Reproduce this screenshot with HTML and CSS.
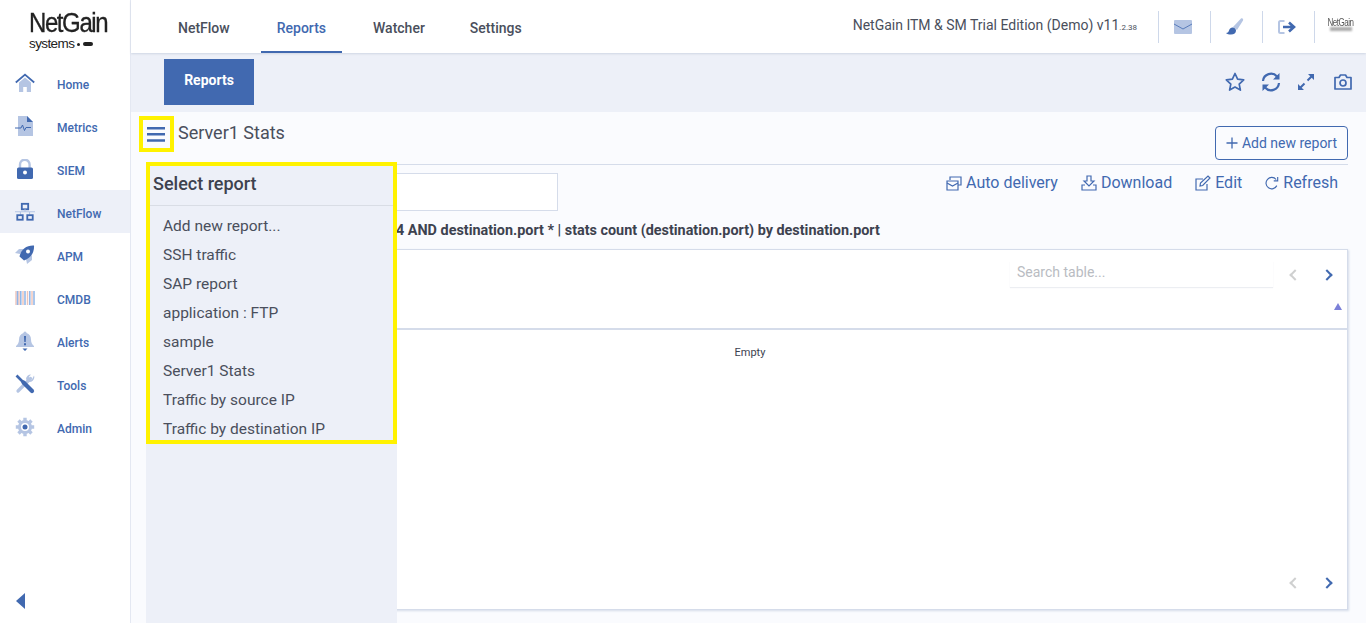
FILE: index.html
```html
<!DOCTYPE html>
<html lang="en">
<head>
    <meta charset="UTF-8">
    <title>NetGain - Reports</title>
    <link rel="stylesheet" href="styles.css">
</head>
<body>
<div class="app">
    <aside class="sidebar">
        <div class="logo">
            <div class="logo_name">NetGain</div>
            <div class="logo_sub">systems <span class="logo_dot"></span><span class="logo_key"></span></div>
        </div>
        <nav class="side_nav">
            <a class="side_item">
                <svg viewBox="0 0 20 20"><path d="M4 9.500 10 4.500l6 5V19h-4.200v-5H8.200v5H4z" fill="#b5c5e3"/><path d="M.8 9.500 10 1.600l9.200 7.900" fill="none" stroke="#4169b0" stroke-width="1.800"/></svg>
                <span>Home</span>
            </a>
            <a class="side_item">
                <svg viewBox="0 0 20 20"><path d="M3 0h9l6 6v14H3z" fill="#b5c5e3"/><path d="M12 0l6 6h-6z" fill="#4169b0"/><path d="M0 12h6l1.500-3 2 5.500 1.500-3h5" fill="none" stroke="#4169b0" stroke-width="1"/></svg>
                <span>Metrics</span>
            </a>
            <a class="side_item">
                <svg viewBox="0 0 20 20"><path d="M5 9V5.500a4.800 4.800 0 0 1 9.600 0V9" fill="none" stroke="#b5c5e3" stroke-width="2.400"/><rect x="2" y="8.500" width="16" height="11.500" rx="1.500" fill="#4169b0"/><circle cx="10" cy="13.500" r="2" fill="#fff"/></svg>
                <span>SIEM</span>
            </a>
            <a class="side_item active">
                <svg viewBox="0 0 22 20"><rect x="7.500" y="1" width="7" height="6" fill="none" stroke="#4169b0" stroke-width="2"/><path d="M11 7v3M0 9.800h22M6 10v3M16 10v3" stroke="#b5c5e3" stroke-width="1.200"/><rect x="2.500" y="13.500" width="6" height="5" fill="none" stroke="#4169b0" stroke-width="2"/><rect x="13.500" y="13.500" width="6" height="5" fill="none" stroke="#4169b0" stroke-width="2"/></svg>
                <span>NetFlow</span>
            </a>
            <a class="side_item">
                <svg viewBox="0 0 20 20"><path d="M5 9 0 8l4-4h5zM11 14l1 5 5-4v-5z" fill="#b5c5e3"/><path d="M4.500 11.500C6 4 12 0 19 .5c.5 7-3 12.500-10 15z" fill="#4169b0"/><circle cx="13" cy="6.500" r="2" fill="#fff"/></svg>
                <span>APM</span>
            </a>
            <a class="side_item">
                <svg viewBox="0 0 20 20"><path d="M1 3v14M4 3v14M8 3v14M12.500 3v14M17 3v14" stroke="#f0c4b8" stroke-width="1.400"/><path d="M2.500 3v14M5.800 3v14M10 3v14M14.800 3v14M19 3v14" stroke="#8fb5e8" stroke-width="1.500"/></svg>
                <span>CMDB</span>
            </a>
            <a class="side_item">
                <svg viewBox="0 0 20 20"><path d="M10 .5c1 0 1.500.8 1.500 1.500 3 1 4.500 3.500 4.500 6.500 0 3 1 5 3 6.500v1H1v-1c2-1.500 3-3.500 3-6.500S5.500 3 8.500 2c0-.7.500-1.500 1.500-1.500z" fill="#b5c5e3"/><path d="M9 5h2l-.3 6H9.300zM9 12.300h2v2H9zM7.500 17.500h5L10 20z" fill="#4169b0"/></svg>
                <span>Alerts</span>
            </a>
            <a class="side_item">
                <svg viewBox="0 0 20 20"><path d="M15.500 4.500 3 17" stroke="#b5c5e3" stroke-width="3.200" fill="none" stroke-linecap="round"/><path d="M19 1.500a4.800 4.800 0 0 1-6.500 6L11 5a4.800 4.800 0 0 1 5-4.500L13.800 3l1 2.200 2 .5z" fill="#b5c5e3"/><path d="M1.500 1.500 8 8" stroke="#4169b0" stroke-width="2.600" fill="none"/><path d="M8.500 8.500 17 17" stroke="#4169b0" stroke-width="4.200" fill="none" stroke-linecap="round"/></svg>
                <span>Tools</span>
            </a>
            <a class="side_item">
                <svg viewBox="0 0 20 20"><circle cx="10" cy="10" r="7" fill="#b5c5e3"/><path d="M10 .8v18.400M.8 10h18.400M3.500 3.500l13 13M16.500 3.500l-13 13" stroke="#b5c5e3" stroke-width="3.400"/><circle cx="10" cy="10" r="4" fill="#fff"/><circle cx="10" cy="10" r="2.500" fill="#4169b0"/></svg>
                <span>Admin</span>
            </a>
        </nav>
        <div class="collapse_arrow"></div>
    </aside>

    <div class="main">
        <header class="topbar">
            <ul class="top_tabs">
                <li>NetFlow</li>
                <li class="active">Reports</li>
                <li>Watcher</li>
                <li>Settings</li>
            </ul>
            <div class="edition">NetGain ITM &amp; SM Trial Edition (Demo) v11<small>.2.38</small></div>
            <div class="top_icon">
                <svg viewBox="0 0 18 14" width="18" height="14"><rect width="18" height="14" rx="1" fill="#b5c5e3"/><path d="M0 4l9 5 9-5" fill="none" stroke="#4169b0" stroke-width=".8"/></svg>
            </div>
            <div class="top_icon">
                <svg viewBox="0 0 18 18" width="18" height="18"><path d="M7 9 15 .5c1-.8 2.800.5 2 2L11 12z" fill="#b5c5e3"/><path d="M6 9.500c2-.5 4 1 4 3 0 2.500-2 4-5 4-2 0-4-.5-5-1.500 2 0 2.500-1 3-2.500.4-1.500 1.500-2.700 3-3z" fill="#4169b0"/></svg>
            </div>
            <div class="top_icon">
                <svg viewBox="0 0 18 14" width="18" height="14"><path d="M6.500 1H2.500a1.500 1.500 0 0 0-1.500 1.500v9A1.500 1.500 0 0 0 2.500 13h4" fill="none" stroke="#b5c5e3" stroke-width="2"/><path d="M5 7h10M11 2.500 16 7l-5 4.500" fill="none" stroke="#4169b0" stroke-width="2.600"/></svg>
            </div>
            <div class="top_icon user_logo"><span>NetGain</span><i></i></div>
        </header>

        <div class="tab_strip">
            <div class="strip_tab">Reports</div>
            <div class="strip_icons">
                <svg viewBox="0 0 20 20" width="20" height="20"><path d="M10 1.500l2.600 5.600 6.100.8-4.500 4.200 1.200 6L10 15.100l-5.400 3 1.200-6L1.300 7.900l6.100-.8z" fill="none" stroke="#4169b0" stroke-width="1.700" stroke-linejoin="round"/></svg>
                <svg viewBox="0 0 20 20" width="20" height="20"><path d="M2 9a8 8 0 0 1 14-4.500M18 11a8 8 0 0 1-14 4.500" fill="none" stroke="#4169b0" stroke-width="2.200"/><path d="M18.500 1v6.500H12zM1.500 19v-6.500H8z" fill="#4169b0"/></svg>
                <svg class="expand" viewBox="0 0 18 18" width="18" height="18"><path d="M10.500 7.500 16 2M2 16l5.500-5.500" stroke="#4169b0" stroke-width="2"/><path d="M11 1h6v6zM1 11v6h6z" fill="#4169b0"/></svg>
                <svg viewBox="0 0 18 16" width="18" height="16"><path d="M1 3.500h4L6.500 1h5L13 3.500h4v11.500H1z" fill="none" stroke="#4169b0" stroke-width="1.700" stroke-linejoin="round"/><circle cx="9" cy="9" r="3" fill="none" stroke="#4169b0" stroke-width="1.700"/></svg>
            </div>
        </div>

        <section class="content">
            <div class="title_row">
                <div class="title">Server1 Stats</div>
                <button class="btn_add"><svg viewBox="0 0 12 12" width="12" height="12"><path d="M6 .5v11M.5 6h11" stroke="#4169b0" stroke-width="1.300"/></svg>Add new report</button>
            </div>
            <div class="tool_row">
                <input class="query_name" type="text">
                <div class="tools">
                    <a><svg viewBox="0 0 16 16" width="16" height="16"><path d="M4 5V2h11v8h-3" fill="none" stroke="#4169b0" stroke-width="1.200"/><path d="M1 6h11v9H1z" fill="none" stroke="#4169b0" stroke-width="1.200"/><path d="M1 8l5.500 3L12 8" fill="none" stroke="#4169b0" stroke-width="1.200"/></svg>Auto delivery</a>
                    <a><svg viewBox="0 0 16 16" width="16" height="16"><path d="M6 1h4v5h3l-5 5-5-5h3z" fill="none" stroke="#4169b0" stroke-width="1.200"/><path d="M4 10H1v5h14v-5h-3" fill="none" stroke="#4169b0" stroke-width="1.200"/></svg>Download</a>
                    <a><svg viewBox="0 0 16 16" width="16" height="16"><path d="M12 9v6H1V4h7" fill="none" stroke="#4169b0" stroke-width="1.200"/><path d="M5 11l.5-3L13 1l2 2-7.300 7.500z" fill="none" stroke="#4169b0" stroke-width="1.200"/></svg>Edit</a>
                    <a><svg viewBox="0 0 16 16" width="14" height="16"><path d="M13.500 11a6.500 6.500 0 1 1-.8-7" fill="none" stroke="#4169b0" stroke-width="1.300"/><path d="M14.500 1v4.500H10" fill="none" stroke="#4169b0" stroke-width="1.300"/></svg>Refresh</a>
                </div>
            </div>
            <div class="query">4 AND destination.port * | stats count (destination.port) by destination.port</div>
            <div class="card">
                <div class="card_top">
                    <div class="search">Search table...</div>
                    <div class="pager"><span class="chev off"></span><span class="chev on"></span></div>
                </div>
                <div class="table_head"><span class="sort_up"></span></div>
                <div class="table_body">Empty</div>
                <div class="pager pager_bottom"><span class="chev off"></span><span class="chev on"></span></div>
            </div>
        </section>
    </div>
</div>

<!-- menu opened over the report, with the yellow marks around it -->
<div class="menu_btn">
    <svg viewBox="0 0 18 15" width="18" height="15"><path d="M0 1.300h18M0 7.300h18M0 13.500h18" stroke="#4169b0" stroke-width="2.500"/></svg>
</div>
<div class="report_menu">
    <div class="report_mark">
        <div class="menu_title">Select report</div>
        <ul class="menu_list">
            <li>Add new report...</li>
            <li>SSH traffic</li>
            <li>SAP report</li>
            <li>application : FTP</li>
            <li>sample</li>
            <li>Server1 Stats</li>
            <li>Traffic by source IP</li>
            <li>Traffic by destination IP</li>
        </ul>
    </div>
</div>
</body>
</html>
```

FILE: styles.css
```css
* {
    box-sizing: border-box;
}
html, body {
    margin: 0;
    height: 100%;
    overflow: hidden;
}
body {
    font-family: Roboto, "Liberation Sans", sans-serif;
    color: #4a4f5c;
    background: #fafbfe;
}
.app {
    display: flex;
    height: 623px;
}

/* sidebar */
.sidebar {
    width: 131px;
    flex: none;
    display: flex;
    flex-direction: column;
    background: #fff;
    border-right: 1px solid #e4e8f2;
}
.logo {
    height: 61px;
    padding: 11px 0 0 29px;
    color: #222;
}
.logo_name {
    font-family: "Liberation Sans", sans-serif;
    font-size: 27px;
    line-height: 25px;
    letter-spacing: -1.6px;
    transform: scaleX(.89);
    transform-origin: left;
    -webkit-text-stroke: .3px #222;
}
.logo_sub {
    display: flex;
    align-items: center;
    font-family: "Liberation Sans", sans-serif;
    font-size: 13.5px;
    line-height: 16px;
    letter-spacing: -.6px;
    white-space: pre;
}
.logo_dot {
    width: 3px;
    height: 3px;
    border-radius: 50%;
    background: #222;
    margin: 0 3px 0 0;
}
.logo_key {
    width: 10px;
    height: 4px;
    border-radius: 2px;
    background: #222;
}
.side_nav {
    display: flex;
    flex-direction: column;
}
.side_item {
    height: 43px;
    display: flex;
    align-items: center;
    padding-left: 15px;
    font-size: 12px;
    font-weight: 500;
    color: #4169b0;
}
.side_item svg {
    width: 20px;
    height: 20px;
    margin-right: 22px;
}
.side_item span {
    margin-top: 4px;
}
.side_item.active {
    background: #edf0f8;
}
.collapse_arrow {
    margin: auto 0 14px 16px;
    width: 0;
    height: 0;
    border-top: 8px solid transparent;
    border-bottom: 8px solid transparent;
    border-right: 9px solid #4169b0;
}

/* top bar */
.main {
    flex: 1;
    min-width: 0;
    display: flex;
    flex-direction: column;
}
.topbar {
    height: 53px;
    flex: none;
    display: flex;
    align-items: center;
    background: #fff;
    box-shadow: 0 1px 2px #cfd6e4;
    position: relative;
    padding-left: 31px;
}
.top_tabs {
    display: flex;
    list-style: none;
    margin: 0;
    padding: 0;
    height: 100%;
    font-size: 14px;
    font-weight: 500;
    color: #4a4f5c;
}
.top_tabs li {
    padding: 5px 16px 0;
    margin-right: 15px;
    display: flex;
    align-items: center;
    border-bottom: 2px solid transparent;
}
.top_tabs li:nth-child(3) {
    margin-right: 13px;
}
.top_tabs li.active {
    color: #4169b0;
    border-bottom-color: #4169b0;
}
.edition {
    margin-left: auto;
    margin-right: 21px;
    margin-top: -3px;
    font-size: 14px;
}
.edition small {
    font-size: 8px;
}
.top_icon {
    width: 52px;
    height: 32px;
    margin-top: 1px;
    padding-right: 3px;
    display: flex;
    align-items: center;
    justify-content: center;
    border-left: 1px solid #ced8ea;
}
.user_logo {
    position: relative;
    padding-right: 0;
    color: #555;
    font-family: "Liberation Sans", sans-serif;
    font-size: 8px;
    letter-spacing: -.5px;
}
.user_logo span {
    filter: blur(.4px);
    margin-top: -9px;
    transform: scaleY(1.4);
}
.user_logo i {
    position: absolute;
    left: 15px;
    top: 16px;
    width: 22px;
    height: 4px;
    background: #aaa;
    filter: blur(1px);
}

/* strip with the open tab */
.tab_strip {
    height: 59px;
    flex: none;
    display: flex;
    padding: 6px 14px 0 33px;
    background: #edf0f8;
}
.strip_tab {
    width: 90px;
    height: 46px;
    padding-bottom: 5px;
    display: flex;
    align-items: center;
    justify-content: center;
    margin-bottom: 7px;
    background: #4169b0;
    color: #fff;
    font-size: 14px;
    font-weight: 700;
}
.strip_icons {
    margin-left: auto;
    margin-top: 13px;
    height: 20px;
    display: flex;
    align-items: center;
    gap: 16px;
}
.strip_icons .expand {
    margin-right: 3px;
}

/* report */
.content {
    flex: 1;
    min-height: 0;
    padding: 0 18px 0 16px;
}
.title_row {
    height: 53px;
    display: flex;
    justify-content: space-between;
    border-bottom: 1px solid #d5dcea;
}
.title {
    margin: 10px 0 0 31px;
    font-size: 18px;
    line-height: 21px;
    color: #4a4f5c;
}
.btn_add {
    width: 133px;
    height: 34px;
    margin-top: 14px;
    padding: 0;
    display: flex;
    align-items: center;
    justify-content: center;
    gap: 4px;
    font-family: inherit;
    font-size: 14px;
    color: #4169b0;
    background: transparent;
    border: 1px solid #4169b0;
    border-radius: 4px;
}
.tool_row {
    height: 47px;
    display: flex;
    align-items: flex-start;
    justify-content: space-between;
}
.query_name {
    width: 300px;
    height: 38px;
    margin: 8px 0 0 111px;
    background: #fff;
    border: 1px solid #d5dcea;
}
.tools {
    display: flex;
    gap: 23px;
    margin: 8px 10px 0 0;
    font-size: 16px;
    color: #4169b0;
}
.tools a {
    display: flex;
    align-items: center;
    gap: 4px;
    line-height: 20px;
}
.query {
    height: 37px;
    padding: 11px 0 0 249px;
    font-size: 14.38px;
    line-height: 16px;
    font-weight: 700;
    color: #3d424f;
    white-space: nowrap;
}
.card {
    position: relative;
    height: 361px;
    margin-left: 5px;
    background: #fff;
    border: 1px solid #d5dcea;
    box-shadow: 1px 1px 2px #d5dcea;
}
.card_top {
    height: 52px;
    display: flex;
    justify-content: flex-end;
    padding: 11px 8px 0 0;
}
.search {
    width: 263px;
    height: 26px;
    padding: 0 7px;
    font-size: 14px;
    line-height: 22px;
    color: #b9bcc2;
    box-shadow: 0 1px 1px #eceef2;
}
.pager {
    width: 66px;
    padding-left: 18px;
    display: flex;
    gap: 24px;
    margin-top: 10px;
}
.chev {
    width: 8px;
    height: 8px;
    border-left: 2px solid #4169b0;
    border-bottom: 2px solid #4169b0;
}
.chev.off {
    border-color: #cfd0d0;
    transform: rotate(45deg);
}
.chev.on {
    transform: rotate(225deg);
}
.table_head {
    height: 28px;
    display: flex;
    justify-content: flex-end;
    align-items: flex-start;
    padding: 1px 5px 0 0;
    border-bottom: 2px solid #d5dcea;
}
.sort_up {
    border-left: 4.5px solid transparent;
    border-right: 4.5px solid transparent;
    border-bottom: 7px solid #7b80d8;
}
.table_body {
    padding-top: 16px;
    text-align: center;
    font-size: 11px;
    line-height: 13px;
    color: #3d424f;
}
.pager_bottom {
    position: absolute;
    right: 8px;
    bottom: 22px;
    margin: 0;
}

/* opened menu */
.menu_btn {
    position: absolute;
    left: 139px;
    top: 116px;
    width: 35px;
    height: 36px;
    padding-right: 2px;
    display: flex;
    align-items: center;
    justify-content: center;
    border: 4px solid #fff200;
}
.report_menu {
    position: absolute;
    left: 146px;
    top: 162px;
    bottom: 0;
    width: 251px;
    background: #edf0f8;
}
.report_mark {
    height: 282px;
    border: 4px solid #fff200;
}
.menu_title {
    height: 40px;
    padding: 6px 0 0 3px;
    font-size: 18px;
    line-height: 24px;
    font-weight: 500;
    color: #3d424f;
    border-bottom: 1px solid #d9dde5;
}
.menu_list {
    list-style: none;
    margin: 0;
    padding: 6px 0 0 13px;
    font-size: 15.5px;
    line-height: 29px;
    color: #4a4f5c;
}
```
